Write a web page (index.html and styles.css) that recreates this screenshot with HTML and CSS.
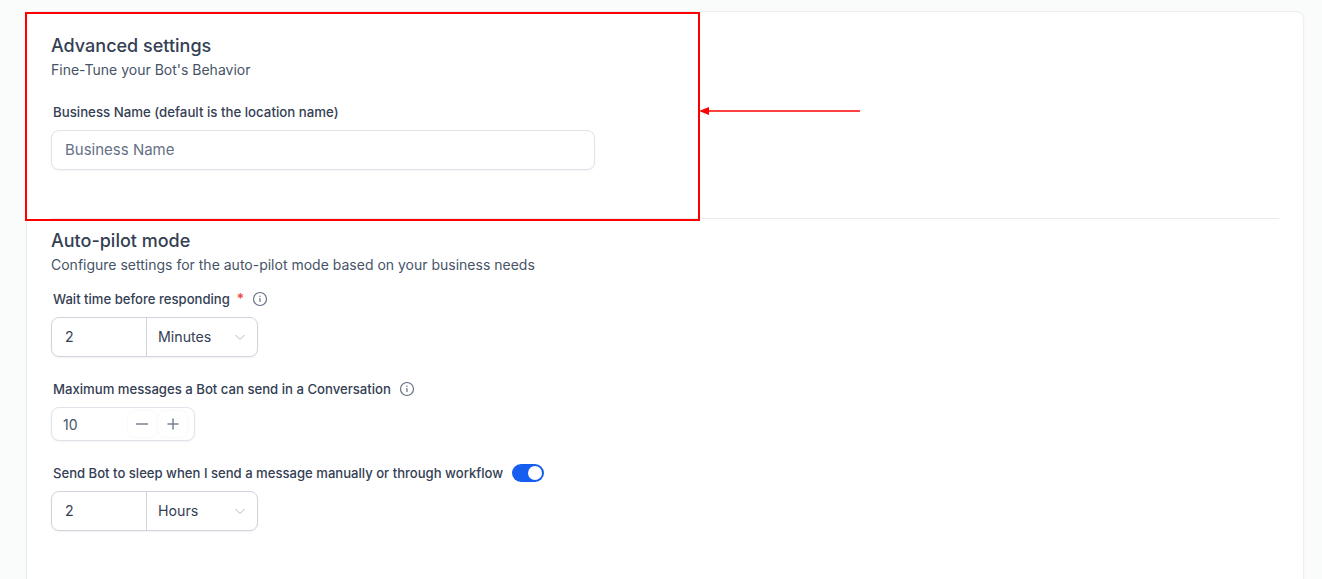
FILE: index.html
```html
<!DOCTYPE html>
<html lang="en">
<head>
    <meta charset="UTF-8">
    <title>Bot Settings</title>
    <link rel="stylesheet" href="styles.css">
</head>
<body>
    <div class="card">
        <section class="section section-first">
            <h2>Advanced settings</h2>
            <p class="subtitle">Fine-Tune your Bot's Behavior</p>
            <label class="label label-business">Business Name (default is the location name)</label>
            <input class="text-input" type="text" placeholder="Business Name">
        </section>
        <section class="section">
            <h2>Auto-pilot mode</h2>
            <p class="subtitle">Configure settings for the auto-pilot mode based on your business needs</p>

            <div class="label label-wait">
                <span>Wait time before responding</span>
                <span class="required">*</span>
                <svg class="info" viewBox="0 0 16 16"><circle cx="8" cy="8" r="6.5"/><path d="M8 11V7.600M7.200 7.600H8"/><circle class="dot" cx="8" cy="5.200" r="0.7"/></svg>
            </div>
            <div class="combo">
                <div class="combo-value">2</div>
                <div class="combo-unit">
                    <span>Minutes</span>
                    <svg class="chevron" viewBox="0 0 12 12"><path d="M1.500 4l4.500 4.500L10.500 4"/></svg>
                </div>
            </div>

            <div class="label label-max">
                <span>Maximum messages a Bot can send in a Conversation</span>
                <svg class="info" viewBox="0 0 16 16"><circle cx="8" cy="8" r="6.5"/><path d="M8 11V7.600M7.200 7.600H8"/><circle class="dot" cx="8" cy="5.200" r="0.7"/></svg>
            </div>
            <div class="stepper">
                <span class="stepper-value">10</span>
                <span class="step-btn"><svg viewBox="0 0 14 14"><path d="M1 7h12"/></svg></span>
                <span class="step-btn"><svg viewBox="0 0 14 14"><path d="M1.500 7h11M7 1.500v11"/></svg></span>
            </div>

            <div class="label label-sleep">
                <span>Send Bot to sleep when I send a message manually or through workflow</span>
                <span class="toggle"><span class="knob"></span></span>
            </div>
            <div class="combo">
                <div class="combo-value">2</div>
                <div class="combo-unit">
                    <span>Hours</span>
                    <svg class="chevron" viewBox="0 0 12 12"><path d="M1.500 4l4.500 4.500L10.500 4"/></svg>
                </div>
            </div>
        </section>
    </div>

    <!-- Annotation drawn on top of the screenshot -->
    <div class="highlight"></div>
    <svg class="arrow" width="162" height="10" viewBox="0 0 162 10"><path class="arrow-line" d="M8 5H161"/><path class="arrow-head" d="M0 5l10-4v8z"/></svg>
</body>
</html>
```

FILE: styles.css
```css
body {
    margin: 0;
    height: 579px;
    overflow: hidden;
    background-color: #fafbfb;
    font-family: Inter, 'Noto Sans', sans-serif;
    color: #344054;
}
.card {
    box-sizing: border-box;
    width: 1278px;
    height: 568px;
    margin: 11px 0 0 26px;
    padding: 0 24px;
    background-color: #fff;
    border: 1px solid #eceef2;
    border-bottom: none;
    border-radius: 8px 8px 0 0;
    box-shadow: 0 1px 2px rgba(16, 24, 40, 0.05);
}
.section {
    padding-top: 11px;
}
.section.section-first {
    box-sizing: border-box;
    height: 207px;
    padding-top: 23px;
    border-bottom: 1px solid #e9eaee;
}
h2 {
    margin: 0;
    font-size: 18px;
    line-height: 22px;
    font-weight: 500;
    color: #344054;
}
.subtitle {
    margin: 3px 0 0;
    font-size: 14px;
    line-height: 20px;
    color: #475467;
}
.label {
    display: flex;
    align-items: center;
    margin-left: 2px;
    font-size: 13.1px;
    line-height: 20px;
    font-weight: 500;
    color: #344054;
}
.label-business {
    margin-top: 22px;
    margin-bottom: 8px;
    font-size: 13.25px;
}
.label-wait {
    margin-top: 14px;
    margin-bottom: 8px;
}
.label-max {
    margin-top: 22px;
    margin-bottom: 8px;
    font-size: 13.15px;
}
.label-sleep {
    margin-top: 22px;
    margin-bottom: 8px;
}
.text-input {
    display: block;
    box-sizing: border-box;
    width: 544px;
    height: 40px;
    padding: 0 13px 2px;
    background: #fff;
    border: 1px solid #e1e3ea;
    border-radius: 8px;
    box-shadow: 0 1px 2px rgba(16, 24, 40, 0.05);
    outline: none;
    font-family: inherit;
    font-size: 15px;
}
.text-input::placeholder {
    color: #667085;
}
.required {
    margin-left: 7px;
    font-size: 14px;
    color: #f04438;
}
.info {
    width: 16px;
    height: 16px;
    margin-left: 8px;
    fill: none;
    stroke: #667085;
    stroke-width: 1.2;
}
.info .dot {
    fill: #667085;
    stroke: none;
}
.combo {
    display: flex;
    box-sizing: border-box;
    width: 207px;
    height: 40px;
    background: #fff;
    border: 1px solid #d0d5dd;
    border-radius: 8px;
    box-shadow: 0 1px 2px rgba(16, 24, 40, 0.05);
    font-size: 14.2px;
    line-height: 38px;
    color: #344054;
}
.combo-value {
    box-sizing: border-box;
    width: 95px;
    padding-left: 13px;
    border-right: 1px solid #d0d5dd;
}
.combo-unit {
    flex: 1;
    display: flex;
    align-items: center;
    justify-content: space-between;
    padding: 0 11px;
}
.chevron {
    width: 12px;
    height: 12px;
    fill: none;
    stroke: #b4bac4;
    stroke-width: 1;
}
.stepper {
    display: flex;
    align-items: center;
    box-sizing: border-box;
    width: 144px;
    height: 34px;
    padding: 0 7px 0 11px;
    gap: 3px;
    background: #fff;
    border: 1px solid #e1e3ea;
    border-radius: 8px;
    box-shadow: 0 1px 2px rgba(16, 24, 40, 0.05);
    font-size: 14px;
    color: #475467;
}
.stepper-value {
    flex: 1;
}
.step-btn {
    display: flex;
    align-items: center;
    justify-content: center;
    width: 28px;
    height: 26px;
    border-radius: 6px;
    box-shadow: 0 0 2px rgba(16, 24, 40, 0.08);
}
.step-btn svg {
    width: 14px;
    height: 14px;
    fill: none;
    stroke: #7b8494;
    stroke-width: 1.5;
}
.toggle {
    display: flex;
    justify-content: flex-end;
    align-items: center;
    box-sizing: border-box;
    width: 32px;
    height: 18px;
    margin-left: 9px;
    padding: 2px;
    background-color: #155eef;
    border-radius: 9px;
}
.knob {
    width: 14px;
    height: 14px;
    background-color: #fff;
    border-radius: 50%;
}
.highlight {
    position: absolute;
    left: 25px;
    top: 12px;
    width: 675px;
    height: 209px;
    box-sizing: border-box;
    border: 2px solid #ff0000;
}
.arrow {
    position: absolute;
    left: 699px;
    top: 105.5px;
}
.arrow-line {
    stroke: #ff0000;
    stroke-width: 1.3;
    fill: none;
}
.arrow-head {
    fill: #ff0000;
}
```
